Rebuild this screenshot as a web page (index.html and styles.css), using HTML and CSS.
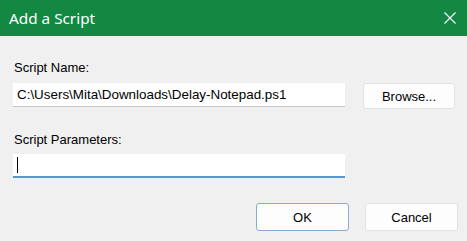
FILE: index.html
```html
<!DOCTYPE html>
<html>
<head>
<meta charset="utf-8">
<link rel="stylesheet" href="styles.css">
</head>
<body>
<div class="dialog">
  <div class="titlebar">
    <span class="title">Add a Script</span>
    <svg class="close" width="12" height="12" viewBox="0 0 12 12"><path d="M0.5 0.5 L11.5 11.5 M11.5 0.5 L0.5 11.5" stroke="#ffffff" stroke-width="1.1" fill="none"/></svg>
  </div>
  <div class="body">
    <div class="label first">Script Name:</div>
    <div class="row">
      <div class="input">C:\Users\Mita\Downloads\Delay-Notepad.ps1</div>
      <div class="btn browse">Browse...</div>
    </div>
    <div class="label second">Script Parameters:</div>
    <div class="row">
      <div class="input focused"><span class="caret"></span></div>
    </div>
    <div class="actions">
      <div class="btn ok">OK</div>
      <div class="btn cancel">Cancel</div>
    </div>
  </div>
</div>
</body>
</html>
```

FILE: styles.css
```css
html, body {
  margin: 0;
  padding: 0;
  background: #f0f0f0;
  width: 467px;
  height: 241px;
  overflow: hidden;
}
.dialog {
  font-family: "Liberation Sans", Arial, sans-serif;
  font-size: 13px;
  color: #000;
}
.titlebar {
  height: 36px;
  background: #128842;
  border-bottom: 2px solid #e4f6ed;
  display: flex;
  align-items: center;
  justify-content: space-between;
  padding: 0 11px 0 9px;
}
.title {
  font-family: "Noto Sans", sans-serif;
  font-size: 15.3px;
  color: #ffffff;
  margin-top: -1px;
}
.close {
  display: block;
}
.body {
  padding: 0 12px 0 13px;
}
.label {
  height: 15px;
  line-height: 15px;
  padding-left: 1px;
}
.label.first {
  margin-top: 22px;
  margin-bottom: 8px;
}
.label.second {
  margin-top: 23px;
  margin-bottom: 7px;
}
.row {
  display: flex;
  align-items: flex-start;
}
.input {
  width: 328px;
  height: 23px;
  line-height: 23px;
  background: #ffffff;
  border-bottom: 1px solid #c4c4c4;
  padding-left: 4px;
  white-space: nowrap;
  overflow: hidden;
  font-size: 13.4px;
}
.input.focused {
  height: 22px;
  border-bottom: 2px solid #5a95cf;
  display: flex;
  align-items: center;
}
.caret {
  display: block;
  width: 1px;
  height: 16px;
  background: #000;
}
.btn {
  box-sizing: border-box;
  height: 26px;
  width: 92px;
  background: #fdfdfd;
  border: 1px solid #e2e2e2;
  border-radius: 3px;
  display: flex;
  align-items: center;
  justify-content: center;
}
.browse {
  margin-left: 18px;
}
.actions {
  display: flex;
  justify-content: flex-end;
  margin-top: 25px;
  margin-right: -3px;
  gap: 16px;
}
.btn.ok, .btn.cancel {
  height: 28px;
  width: 93px;
}
.btn.ok {
  border-color: #86acd6;
}
```
